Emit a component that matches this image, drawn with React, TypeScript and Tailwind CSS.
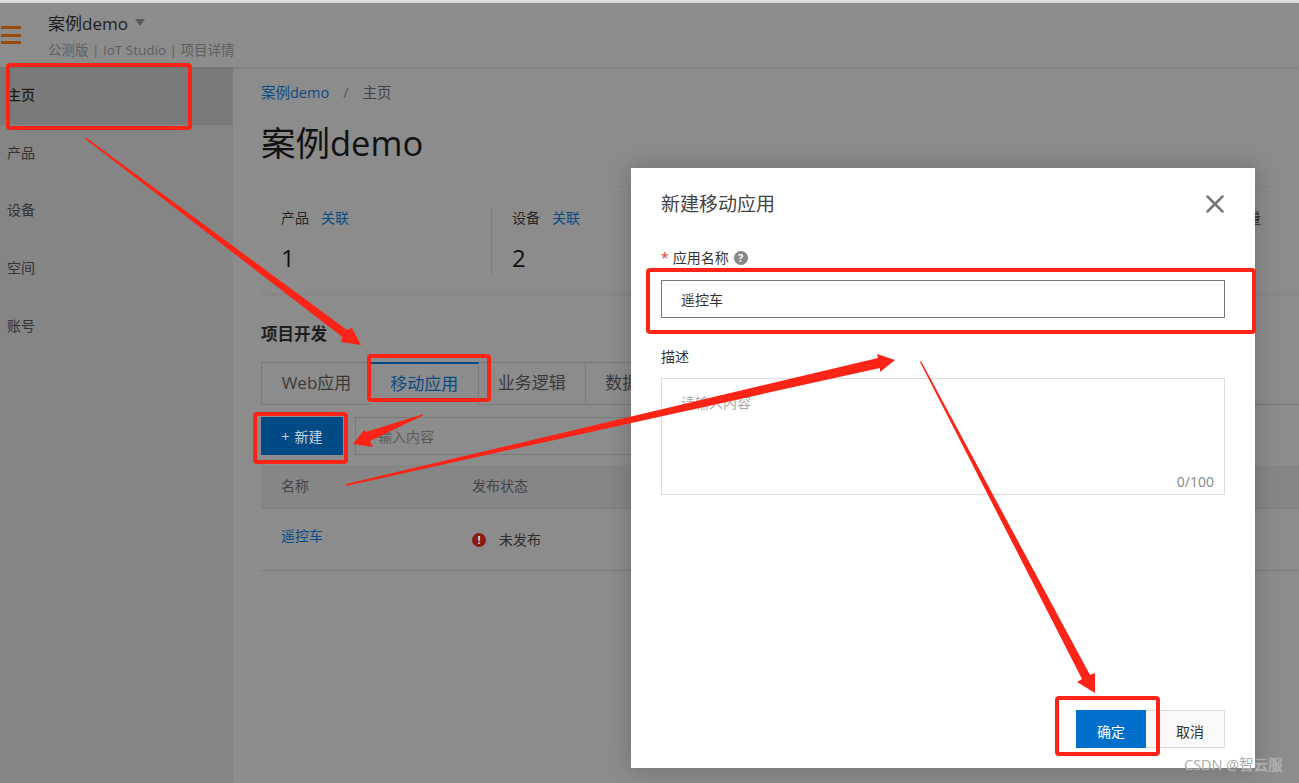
import { X } from 'lucide-react';

const navItems = ['主页', '产品', '设备', '空间', '账号'];

const stats = [
  { label: '产品', link: '关联', value: '1' },
  { label: '设备', link: '关联', value: '2' },
  { label: '', link: '', value: '' },
  { label: '', link: '', value: '' },
  { label: '数据存量', link: '', value: '' },
];

const tabs = ['Web应用', '移动应用', '业务逻辑', '数据分析'];

function Header() {
  return (
    <header className="h-[64px] flex items-center shadow-[0_1px_3px_rgba(0,0,0,0.1)] relative z-10">
      <div className="w-[48px] pl-[1px] flex flex-col gap-[4.5px]">
        <div className="w-[20px] h-[3px] bg-[#9a4a0a]" />
        <div className="w-[20px] h-[3px] bg-[#9a4a0a]" />
        <div className="w-[20px] h-[3px] bg-[#9a4a0a]" />
      </div>
      <div className="flex flex-col">
        <div className="flex items-center gap-[7px] text-[17px] leading-[24px] text-[#1f1f1f] mt-[2px]">
          案例demo
          <span className="w-0 h-0 border-x-[5px] border-x-transparent border-t-[7px] border-t-[#5a5a5a] mb-[3px]" />
        </div>
        <div className="text-[13.5px] leading-[20px] mt-[4px] text-[#5f5f5f]">公测版 | IoT Studio | 项目详情</div>
      </div>
    </header>
  );
}

function Sidebar() {
  return (
    <aside className="w-[233px] shrink-0 bg-[#858585]">
      {navItems.map((item, i) => (
        <div
          key={item}
          className={`h-[57.7px] pl-[7px] pb-[3px] flex items-center text-[14px] ${
            i === 0 ? 'bg-[#7b7b7b] text-[#1c1c1c] font-medium' : 'text-[#333333]'
          }`}
        >
          {item}
        </div>
      ))}
    </aside>
  );
}

function StatsCard() {
  return (
    <div className="mt-[17px] h-[108px] pt-[18px] pl-[20px] flex border-y border-[#878787] shadow-[0_1px_2px_rgba(0,0,0,0.05)]">
      {stats.map((s, i) => (
        <div key={i} className={`w-[231px] shrink-0 h-[69px] relative ${i === 1 ? 'before:absolute before:left-[-21px] before:top-[1px] before:h-full before:w-px before:bg-[#7f7f7f]' : ''}`}>
          <div className="h-[24px] flex items-center gap-[12px] text-[14px] text-[#262626] whitespace-nowrap">
            <span>{s.label}</span>
            <span className="text-[#0a4a85]">{s.link}</span>
          </div>
          <div className="text-[24px] leading-[32px] mt-[13px] text-[#111111]">{s.value}</div>
        </div>
      ))}
    </div>
  );
}

function Tabs() {
  return (
    <div className="mt-[18px] h-[42px] flex border-b border-[#7a7a7a] box-content -mb-px">
      {tabs.map((t, i) => (
        <div
          key={t}
          className={`h-[43px] shrink-0 pb-[2px] flex items-center justify-center text-[17px] border-t ${
            i === 0 ? 'w-[110px] border-l' : 'w-[107.5px] border-r'
          } ${
            i === 1
              ? 'border-r-[#7a7a7a] border-t-2 border-t-[#004a86] bg-[#8c8c8c] text-[#0a4a85]'
              : 'border-[#7a7a7a] text-[#3a3a3a]'
          }`}
        >
          {t}
        </div>
      ))}
    </div>
  );
}

function AppTable() {
  return (
    <div className="mt-[10px] text-[14px]">
      <div className="h-[44px] pb-[3px] bg-[#868686] border-b border-[#7e7e7e] flex items-center text-[#444444]">
        <div className="w-[211px] pl-[20px]">名称</div>
        <div>发布状态</div>
      </div>
      <div className="h-[62px] border-b border-[#7e7e7e] flex">
        <div className="w-[211px] pl-[20px] pt-[16px] text-[#0a4a85]">遥控车</div>
        <div className="pt-[20px] flex items-start gap-[13px] text-[#2c2c2c]">
          <span className="w-[14px] h-[14px] mt-[4px] rounded-full bg-[#8c1c13] text-[#d8d8d8] text-[11px] leading-[14px] font-bold text-center">!</span>
          未发布
        </div>
      </div>
    </div>
  );
}

function Modal() {
  return (
    <div className="absolute left-[631px] top-[168px] w-[624px] h-[600px] bg-white shadow-[0_0_24px_rgba(0,0,0,0.22)] z-20 px-[30px] text-[#333333]">
      <div className="h-[72px] flex items-center justify-between">
        <span className="text-[19px] text-[#444444]">新建移动应用</span>
        <X className="w-[30px] h-[30px] text-[#777777] -mr-[5px]" strokeWidth={2} />
      </div>
      <div className="h-[40px] flex items-center text-[14px] pb-[5px]">
        <span className="text-[#e0402f] mr-[4px]">*</span>
        应用名称
        <span className="ml-[5px] w-[14px] h-[14px] rounded-full bg-[#888888] text-white text-[11px] leading-[14px] font-bold text-center">?</span>
      </div>
      <div className="h-[38px] border border-[#777777] pl-[19px] flex items-center text-[14px] text-[#333333]">遥控车</div>
      <div className="mt-[28px] h-[20px] flex items-center text-[14px]">描述</div>
      <div className="mt-[12px] h-[117px] border border-[#dcdcdc] relative pl-[19px] pt-[13px] text-[14px] text-[#aaaaaa]">
        请输入内容
        <span className="absolute right-[10px] bottom-[2px] text-[14px] text-[#888888]">0/100</span>
      </div>
      <div className="absolute right-[30px] bottom-[20px] flex text-[14px]">
        <button className="w-[70px] h-[38px] bg-[#006fcc] text-white pt-[5px]">确定</button>
        <button className="w-[79px] h-[38px] bg-[#f9f9f9] border border-[#dcdcdc] border-l-0 text-[#333333] pt-[5px] pl-[10px]">取消</button>
      </div>
    </div>
  );
}

function Annotations() {
  return (
    <>
      <div className="absolute left-[6px] top-[63px] w-[186px] h-[67px] border-[4px] border-[#fb2416] rounded-[4px] z-30" />
      <div className="absolute left-[367px] top-[354px] w-[124px] h-[48px] border-[4px] border-[#fb2416] rounded-[4px] z-30" />
      <div className="absolute left-[253px] top-[412px] w-[95px] h-[52px] border-[4px] border-[#fb2416] rounded-[4px] z-30" />
      <div className="absolute left-[646px] top-[268px] w-[610px] h-[66px] border-[4px] border-[#fb2416] rounded-[4px] z-30" />
      <div className="absolute left-[1055px] top-[696px] w-[105px] h-[60px] border-[4px] border-[#fb2416] rounded-[4px] z-30" />
      <svg className="absolute left-0 top-0 z-30 pointer-events-none" width="1299" height="783" viewBox="0 0 1299 783" fill="#fb2416">
        <polygon points="86,137.5 347,330 352,328 361,345 341,342 342.5,337 85,138.8" />
        <polygon points="422,414.5 366,432 364,430 353,444 373,447 370,441 423,415.5" />
        <polygon points="346,484 878,358 877,354 895,360 880,372 880,368 346,486" />
        <polygon points="921,361 1090,675 1095,673 1095,693 1077,682 1082,679 920,362" />
      </svg>
    </>
  );
}

export default function App() {
  return (
    <div className="relative w-[1299px] h-[783px] overflow-hidden bg-[#8c8c8c] [font-family:'Open_Sans','Noto_Sans_CJK_SC',sans-serif]">
      <div className="h-[3px] bg-[#dcdcdc]" />
      <Header />
      <div className="flex h-[716px]">
        <Sidebar />
        <main className="flex-1 pl-[28px] min-w-0">
          <div className="mt-[16px] h-[20px] flex items-center text-[14.5px] text-[#444444]">
            <span className="text-[#0a4a85]">案例demo</span>
            <span className="mx-[14px] text-[#555555]">/</span>
            <span>主页</span>
          </div>
          <h1 className="mt-[16px] h-[50px] text-[34.5px] leading-[48px] text-[#111111]">案例demo</h1>
          <StatsCard />
          <h2 className="mt-[30px] h-[20px] text-[16.5px] leading-[20px] font-bold text-[#1f1f1f]">项目开发</h2>
          <Tabs />
          <div className="mt-[13px] h-[38px] flex gap-[12px]">
            <button className="w-[82px] h-[38px] bg-[#004a86] text-[#c9d3dc] text-[14px] flex items-center justify-center gap-[5px]">
              <span>+</span>
              <span>新建</span>
            </button>
            <div className="w-[400px] border border-[#7a7a7a] pl-[22px] flex items-center text-[14px] text-[#5c5c5c]">输入内容</div>
          </div>
          <AppTable />
        </main>
      </div>
      <Modal />
      <Annotations />
      <div className="absolute left-[1184px] top-[755px] z-40 text-[14.5px] leading-[20px] text-[#ababab] [text-shadow:0_0_1px_rgba(255,255,255,0.6)]">CSDN @智云服</div>
    </div>
  );
}
